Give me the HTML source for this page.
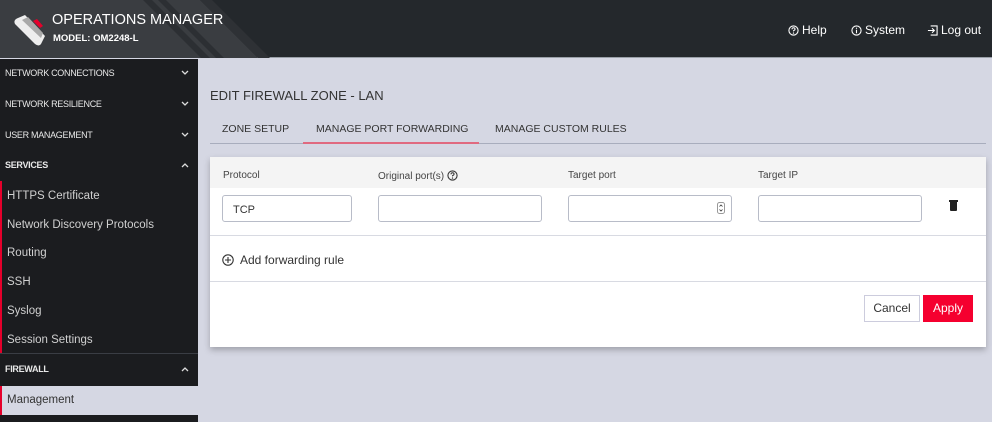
<!DOCTYPE html>
<html><head><meta charset="utf-8"><style>
*{box-sizing:border-box;margin:0;padding:0}
body{width:992px;height:422px;overflow:hidden;background:#d5d7e3;font-family:"Liberation Sans",sans-serif;position:relative}
.hdr{position:absolute;left:0;top:0;width:992px;height:58px;background:#24282c;border-bottom:1px solid #9aa0a8}
.side{position:absolute;left:0;top:59px;width:198px;height:363px;background:#1b1c1f}
.si{position:absolute;left:0;width:198px;color:#e8e8e8;font-size:9px;letter-spacing:-0.3px}
.si svg{position:absolute;left:176px;top:2px}
.sub{position:absolute;left:7px;color:#d0d0d0;font-size:11.5px}
.abs{position:absolute}
.inp{position:absolute;top:195px;height:27px;border:1px solid #b8bcc8;border-radius:3px;background:#fff}
.lbl{position:absolute;top:170px;font-size:10px;color:#444}
.hl{position:absolute;top:23px;color:#fff;font-size:12px}
.hl svg{vertical-align:-2px;margin-right:3px}
</style></head><body>
<div class="hdr">
<svg width="992" height="58" style="position:absolute;left:0;top:0">
<polygon points="0,0 200,0 258,58 0,58" fill="#3a3d41"/>
<polygon points="143,0 152,0 210,58 201,58" fill="#2c2f33"/>
<polygon points="158,0 166,0 224,58 216,58" fill="#2c2f33"/>
<polygon points="200,0 212,0 270,58 258,58" fill="#2e3135"/>
<g transform="translate(13,14)">
<path d="M2,10 Q0,6 5,4 L12,1 L32,22 L28,30 Q26,33 22,30 Z" fill="#eeeeee"/>
<path d="M9,6 L15,3 L30,19 L28,24 Z" fill="#a9a9a9"/>
<path d="M20,7 L24,5 L30,12 L27,14 Z" fill="#e5002b"/>
</g>
</svg>
<div class="abs" style="left:52px;top:12px;color:#fff;font-size:14.5px">OPERATIONS MANAGER</div>
<div class="abs" style="left:53px;top:33px;color:#fff;font-size:9.5px;font-weight:bold">MODEL: OM2248-L</div>
<div class="hl" style="left:788px"><svg width="11" height="11" viewBox="0 0 12 12"><circle cx="6" cy="6" r="5" fill="none" stroke="#fff" stroke-width="1.2"/><path d="M4.3,4.7 Q4.5,3 6,3 Q7.7,3 7.7,4.5 Q7.7,5.5 6,6.2 L6,7" fill="none" stroke="#fff" stroke-width="1.1"/><circle cx="6" cy="8.8" r=".7" fill="#fff"/></svg>Help</div>
<div class="hl" style="left:851px"><svg width="11" height="11" viewBox="0 0 12 12"><circle cx="6" cy="6" r="5" fill="none" stroke="#fff" stroke-width="1.2"/><path d="M6,5.2 L6,9" stroke="#fff" stroke-width="1.2"/><circle cx="6" cy="3.5" r=".7" fill="#fff"/></svg>System</div>
<div class="hl" style="left:927px"><svg width="11" height="11" viewBox="0 0 12 12"><path d="M4,1 L11,1 L11,11 L4,11" fill="none" stroke="#fff" stroke-width="1.2"/><path d="M1,6 L8,6 M5.5,3.5 L8,6 L5.5,8.5" fill="none" stroke="#fff" stroke-width="1.2"/></svg>Log out</div>
</div>
<div class="side">
<div class="si" style="top:9px;left:5px">NETWORK CONNECTIONS<svg width="8" height="6"><path d="M1,1 L4,4 L7,1" fill="none" stroke="#ddd" stroke-width="1.3"/></svg></div>
<div class="si" style="top:40px;left:5px">NETWORK RESILIENCE<svg width="8" height="6"><path d="M1,1 L4,4 L7,1" fill="none" stroke="#ddd" stroke-width="1.3"/></svg></div>
<div class="si" style="top:71px;left:5px">USER MANAGEMENT<svg width="8" height="6"><path d="M1,1 L4,4 L7,1" fill="none" stroke="#ddd" stroke-width="1.3"/></svg></div>
<div class="si" style="top:101px;left:5px;font-weight:bold">SERVICES<svg width="8" height="6"><path d="M1,5 L4,2 L7,5" fill="none" stroke="#ddd" stroke-width="1.3"/></svg></div>
<div class="abs" style="left:0;top:122px;width:2px;height:172px;background:#e5002b"></div>
<div class="sub" style="top:131px">HTTPS Certificate</div>
<div class="sub" style="top:160px">Network Discovery Protocols</div>
<div class="sub" style="top:188px">Routing</div>
<div class="sub" style="top:217px">SSH</div>
<div class="sub" style="top:246px">Syslog</div>
<div class="sub" style="top:275px">Session Settings</div>
<div class="abs" style="left:0;top:294px;width:198px;height:1px;background:#3a3d44"></div>
<div class="si" style="top:305px;left:5px;font-weight:bold">FIREWALL<svg width="8" height="6"><path d="M1,5 L4,2 L7,5" fill="none" stroke="#ddd" stroke-width="1.3"/></svg></div>
<div class="abs" style="left:0;top:327px;width:198px;height:29px;background:#d5d7e3;border-left:2px solid #e5002b"></div>
<div class="sub" style="top:335px;color:#333">Management</div>
</div>
<div class="abs" style="left:210px;top:88px;font-size:13px;color:#333">EDIT FIREWALL ZONE - LAN</div>
<div class="abs" style="left:222px;top:123px;font-size:10.5px;color:#333">ZONE SETUP</div>
<div class="abs" style="left:316px;top:123px;font-size:10.5px;color:#333">MANAGE PORT FORWARDING</div>
<div class="abs" style="left:495px;top:123px;font-size:10.5px;color:#333">MANAGE CUSTOM RULES</div>
<div class="abs" style="left:210px;top:143px;width:776px;height:1px;background:#a8adbd"></div>
<div class="abs" style="left:303px;top:142px;width:176px;height:2px;background:#e06a80"></div>
<div class="abs" style="left:210px;top:157px;width:776px;height:190px;background:#fff;box-shadow:0 3px 6px rgba(0,0,0,.25)"></div>
<div class="abs" style="left:210px;top:157px;width:776px;height:31px;background:#f4f4f4"></div>
<div class="lbl" style="left:223px">Protocol</div>
<div class="lbl" style="left:378px">Original port(s) <svg width="11" height="11" viewBox="0 0 12 12" style="vertical-align:-2px"><circle cx="6" cy="6" r="5" fill="none" stroke="#333" stroke-width="1.2"/><path d="M4.3,4.7 Q4.5,3 6,3 Q7.7,3 7.7,4.5 Q7.7,5.5 6,6.2 L6,7" fill="none" stroke="#333" stroke-width="1.1"/><circle cx="6" cy="8.8" r=".7" fill="#333"/></svg></div>
<div class="lbl" style="left:568px">Target port</div>
<div class="lbl" style="left:758px">Target IP</div>
<div class="inp" style="left:222px;width:130px;font-size:11px;color:#333;padding:8px 10px">TCP</div>
<div class="inp" style="left:378px;width:164px"></div>
<div class="inp" style="left:568px;width:164px"><svg width="8" height="12" style="position:absolute;right:6px;top:6px"><rect x=".5" y=".5" width="7" height="11" rx="2" fill="#fff" stroke="#999"/><path d="M2.5,4.5 L4,3 L5.5,4.5 M2.5,7.5 L4,9 L5.5,7.5" fill="none" stroke="#333" stroke-width=".8"/></svg></div>
<div class="inp" style="left:758px;width:164px"></div>
<div class="abs" style="left:950px;top:202px;width:7px;height:9px;background:#222;border-radius:0 0 1px 1px"></div>
<div class="abs" style="left:949px;top:200px;width:9px;height:2px;background:#222"></div>
<div class="abs" style="left:222px;top:253px;font-size:12px;color:#333"><svg width="12" height="12" viewBox="0 0 12 12" style="vertical-align:-2px;margin-right:6px"><circle cx="6" cy="6" r="5.2" fill="none" stroke="#333" stroke-width="1.1"/><path d="M6,3 L6,9 M3,6 L9,6" stroke="#333" stroke-width="1.1"/></svg>Add forwarding rule</div>
<div class="abs" style="left:210px;top:235px;width:776px;height:1px;background:#d8dae2"></div>
<div class="abs" style="left:210px;top:281px;width:776px;height:1px;background:#d8dae2"></div>
<div class="abs" style="left:864px;top:295px;width:56px;height:27px;border:1px solid #ccd;font-size:12px;color:#333;text-align:center;line-height:25px">Cancel</div>
<div class="abs" style="left:923px;top:295px;width:50px;height:27px;background:#f5002f;font-size:12px;color:#fff;text-align:center;line-height:27px">Apply</div>
</body></html>
